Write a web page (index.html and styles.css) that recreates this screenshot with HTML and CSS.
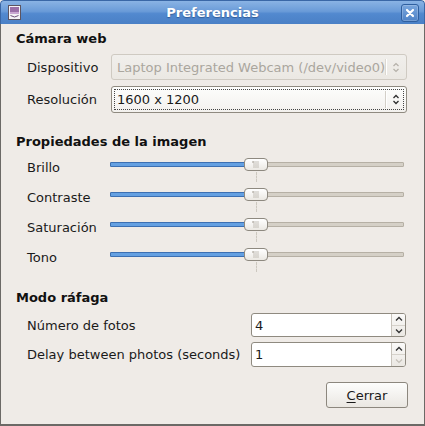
FILE: index.html
```html
<!DOCTYPE html>
<html lang="es">
<head>
<meta charset="utf-8">
<title>Preferencias</title>
<link rel="stylesheet" href="styles.css">
</head>
<body>
<div class="window">
  <div class="titlebar">
    <svg class="app-icon" width="13" height="15" viewBox="0 0 13 15">
      <rect x="0.5" y="0.5" width="12" height="14" fill="#f4f2f6" stroke="#5d5460"/>
      <rect x="2" y="2" width="9" height="5" fill="#9a6fa8"/>
      <rect x="2" y="7" width="9" height="2" fill="#c9a7d2"/>
      <path d="M2.5 10.5 Q6.5 13.5 10.5 10.5" stroke="#6c4f78" fill="none"/>
    </svg>
    <span class="title">Preferencias</span>
    <span class="close">
      <svg width="10" height="10" viewBox="0 0 10 10"><path d="M2 2 L8 8 M8 2 L2 8" stroke="#fff" stroke-width="2.2" stroke-linecap="round"/></svg>
    </span>
  </div>
  <div class="content">
    <div class="section-title s1">Cámara web</div>
    <div class="form cam">
      <span class="label">Dispositivo</span>
      <div class="combo disabled">
        <span class="combo-text">Laptop Integrated Webcam (/dev/video0)</span>
        <span class="sep"></span>
        <svg class="chev" width="8" height="11" viewBox="0 0 8 11"><path d="M1.5 4 L4 1.5 L6.5 4 M1.5 7 L4 9.5 L6.5 7" fill="none" stroke="#b4b0a8" stroke-width="1.2"/></svg>
      </div>
      <span class="label">Resolución</span>
      <div class="combo focus">
        <span class="combo-text">1600 x 1200</span>
        <span class="sep"></span>
        <svg class="chev" width="8" height="11" viewBox="0 0 8 11"><path d="M1.5 4 L4 1.5 L6.5 4 M1.5 7 L4 9.5 L6.5 7" fill="none" stroke="#2e2e2e" stroke-width="1.3"/></svg>
      </div>
    </div>

    <div class="section-title s2">Propiedades de la imagen</div>
    <div class="form sliders">
      <span class="label">Brillo</span>
      <div class="slider"><span class="trough"></span><span class="fill"></span><span class="tick"></span><span class="thumb"></span></div>
      <span class="label">Contraste</span>
      <div class="slider"><span class="trough"></span><span class="fill"></span><span class="tick"></span><span class="thumb"></span></div>
      <span class="label">Saturación</span>
      <div class="slider"><span class="trough"></span><span class="fill"></span><span class="tick"></span><span class="thumb"></span></div>
      <span class="label">Tono</span>
      <div class="slider"><span class="trough"></span><span class="fill"></span><span class="tick"></span><span class="thumb"></span></div>
    </div>

    <div class="section-title s3">Modo ráfaga</div>
    <div class="form burst">
      <span class="label">Número de fotos</span>
      <div class="spin">
        <span class="spin-text">4</span>
        <span class="spin-btns">
          <span class="sb"><svg width="8" height="6" viewBox="0 0 8 6"><path d="M1 4.5 L4 1.5 L7 4.5" fill="none" stroke="#333" stroke-width="1.3"/></svg></span>
          <span class="sb"><svg width="8" height="6" viewBox="0 0 8 6"><path d="M1 1.5 L4 4.5 L7 1.5" fill="none" stroke="#333" stroke-width="1.3"/></svg></span>
        </span>
      </div>
      <span class="label">Delay between photos (seconds)</span>
      <div class="spin tall">
        <span class="spin-text">1</span>
        <span class="spin-btns">
          <span class="sb"><svg width="8" height="6" viewBox="0 0 8 6"><path d="M1 4.5 L4 1.5 L7 4.5" fill="none" stroke="#333" stroke-width="1.3"/></svg></span>
          <span class="sb off"><svg width="8" height="6" viewBox="0 0 8 6"><path d="M1 1.5 L4 4.5 L7 1.5" fill="none" stroke="#c4c0b8" stroke-width="1.2"/></svg></span>
        </span>
      </div>
    </div>

    <div class="actions">
      <button class="btn" type="button"><u>C</u>errar</button>
    </div>
  </div>
</div>
</body>
</html>
```
FILE: styles.css
```css
html, body {
  margin: 0;
  padding: 0;
  background: #efebe7;
}
body {
  font-family: "DejaVu Sans", sans-serif;
  font-size: 13px;
  color: #1a1a1a;
}
.window {
  width: 425px;
  height: 426px;
  display: flex;
  flex-direction: column;
  overflow: hidden;
  border-radius: 4px 4px 0 0;
}
.titlebar {
  height: 24px;
  box-sizing: border-box;
  flex: none;
  display: flex;
  align-items: center;
  position: relative;
  background: linear-gradient(#8ab3e4 0%, #6a9bd8 45%, #5289cf 55%, #4a80c6 100%);
  border: 1px solid #3a67a6;
  border-bottom: none;
  border-radius: 4px 4px 0 0;
  padding: 0 5px 0 7px;
}
.app-icon {
  flex: none;
  margin-top: 0;
}
.title {
  flex: 1;
  text-align: center;
  color: #fff;
  font-weight: bold;
  font-size: 13px;
  text-shadow: 0 1px 1px rgba(20, 50, 100, 0.5);
  margin-left: 3px;
}
.close {
  flex: none;
  width: 18px;
  height: 18px;
  box-sizing: border-box;
  border: 1px solid #2f5f9f;
  border-radius: 3px;
  background: linear-gradient(#7aa6dd, #4f83c7);
  box-shadow: inset 0 0 0 1px rgba(255, 255, 255, 0.2);
  display: flex;
  align-items: center;
  justify-content: center;
  margin-right: 0;
}
.content {
  flex: 1;
  background: #efebe7;
  border-left: 1px solid #6b6966;
  border-right: 1px solid #6b6966;
  border-bottom: 2px solid #6b6966;
  display: flex;
  flex-direction: column;
}
.section-title {
  font-weight: bold;
  line-height: 18px;
  height: 18px;
  margin-left: 15px;
  color: #111;
}
.s1 { margin-top: 6px; }
.s2 { margin-top: 20px; }
.s3 { margin-top: 17px; }

.form {
  display: grid;
  padding-left: 26px;
  padding-right: 18px;
  align-items: center;
}
.label {
  color: #1a1a1a;
  white-space: nowrap;
}
.cam {
  margin-top: 6px;
  grid-template-columns: 84px 1fr;
  grid-template-rows: 26px 27px;
  row-gap: 6px;
}
.combo {
  height: 100%;
  box-sizing: border-box;
  border: 1px solid #8f8a80;
  border-radius: 3px;
  display: flex;
  align-items: center;
  padding-left: 5px;
  background: linear-gradient(#fdfdfc, #f3f1ee);
  position: relative;
}
.combo-text {
  flex: 1;
  white-space: nowrap;
  overflow: hidden;
}
.combo.disabled {
  border-color: #cfcac2;
  background: linear-gradient(#f1efec, #ebe8e3);
}
.combo.disabled .combo-text {
  color: #aaa69e;
}
.combo.focus::after {
  content: "";
  position: absolute;
  left: 2px;
  top: 2px;
  right: 2px;
  bottom: 2px;
  border: 1px dotted #444;
  pointer-events: none;
}
.sep {
  width: 1px;
  align-self: stretch;
  margin: 4px 0;
  background: #d3cfc8;
  border-right: 1px solid #fff;
}
.combo.disabled .sep { background: #dcd8d1; }
.chev {
  flex: none;
  margin: 0 6px 0 5px;
}

.sliders {
  margin-top: 1px;
  grid-template-columns: 83px 1fr;
  grid-template-rows: repeat(4, 30px);
}
.slider {
  height: 30px;
  position: relative;
  margin-right: 2px;
}
.trough {
  position: absolute;
  left: 0;
  right: 0;
  top: 10px;
  height: 5px;
  box-sizing: border-box;
  background: #d5d0c7;
  border: 1px solid #b6b0a5;
  border-radius: 1px;
}
.fill {
  position: absolute;
  left: 0;
  top: 10px;
  width: 140px;
  height: 5px;
  box-sizing: border-box;
  background: #64a0e2;
  border: 1px solid #3c70b3;
  border-radius: 1px;
}
.tick {
  position: absolute;
  left: 146px;
  top: 20px;
  height: 10px;
  border-left: 1px dashed #cdc8c0;
}
.thumb {
  position: absolute;
  left: 134px;
  top: 6px;
  width: 24px;
  height: 13px;
  box-sizing: border-box;
  border: 1px solid #8e8980;
  border-radius: 4px;
  background:
    radial-gradient(circle, #b7b2a9 0.6px, transparent 0.9px) 7px 2px / 2px 2px no-repeat,
    linear-gradient(#ffffff, #ebe8e3);
}
.thumb::after {
  content: "";
  position: absolute;
  left: 8px;
  top: 2px;
  width: 6px;
  height: 7px;
  background: radial-gradient(circle, #b3aea5 0.55px, transparent 0.8px) 0 0 / 2px 2px;
}

.burst {
  margin-top: 6px;
  grid-template-columns: 224px 1fr;
  grid-template-rows: 24px 25px;
  row-gap: 5px;
}
.spin {
  height: 100%;
  box-sizing: border-box;
  border: 1px solid #8f8a80;
  border-radius: 3px;
  background: #fff;
  display: flex;
  align-items: stretch;
}
.spin-text {
  flex: 1;
  padding-left: 3px;
  display: flex;
  align-items: center;
}
.spin-btns {
  width: 13px;
  display: flex;
  flex-direction: column;
  border-left: 1px solid #c8c3bb;
  background: linear-gradient(#fbfaf9, #ebe8e3);
  border-radius: 0 2px 2px 0;
}
.sb {
  flex: 1;
  display: flex;
  align-items: center;
  justify-content: center;
}
.sb + .sb {
  border-top: 1px solid #d6d2cb;
}

.actions {
  margin-top: 15px;
  display: flex;
  justify-content: flex-end;
  padding-right: 16px;
}
.btn {
  width: 82px;
  height: 26px;
  box-sizing: border-box;
  border: 1px solid #8c877e;
  border-radius: 3px;
  background: linear-gradient(#fdfdfc, #eae7e2);
  font-family: "DejaVu Sans", sans-serif;
  font-size: 13px;
  color: #1a1a1a;
  padding: 0;
}
.btn u {
  text-decoration-thickness: 1px;
  text-underline-offset: 2px;
}
```
